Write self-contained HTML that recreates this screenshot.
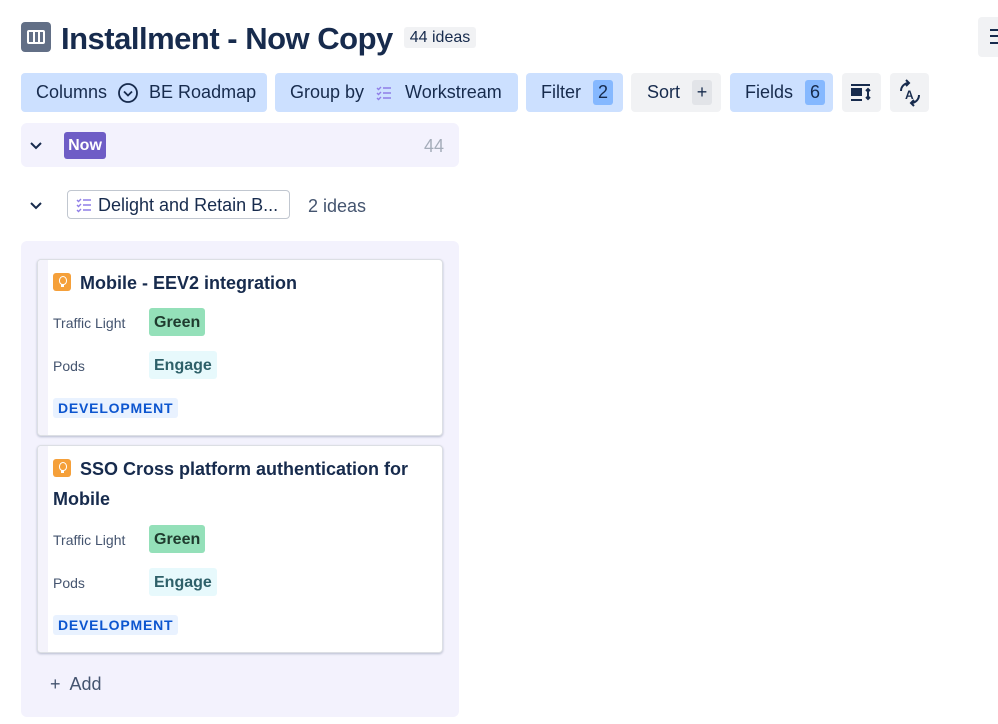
<!DOCTYPE html>
<html><head><style>
*{box-sizing:border-box;margin:0;padding:0}
body{width:998px;height:724px;background:#fff;font-family:"Liberation Sans",sans-serif;color:#172b4d;position:relative;overflow:hidden}
.a{position:absolute}
.btn{position:absolute;top:73px;height:39px;border-radius:4px;display:flex;align-items:center;font-size:18px;color:#172b4d}
.blue{background:#cce0ff}.gray{background:#f1f2f4}
.cnt{display:inline-block;width:20px;height:25px;border-radius:3px;background:#85b8ff;text-align:center;line-height:25px;margin-left:12px}
.card{position:absolute;left:37px;width:406px;background:#fff;border:1px solid #dcdfe4;border-radius:4px;box-shadow:0 1px 2px rgba(9,30,66,.25);overflow:hidden}
.card:before{content:"";position:absolute;left:0;top:0;bottom:0;width:10px;background:#f4f3fb}
.ttl{position:absolute;left:15px;font-size:18px;font-weight:bold;line-height:30px;color:#172b4d}
.ic{display:inline-block;width:18px;height:18px;background:#f5a03a;border-radius:3px;vertical-align:-2px;margin-right:9px;position:relative}
.ic:after{content:"";position:absolute;left:6px;top:3px;width:6px;height:7px;border:1.5px solid #fff;border-radius:50% 50% 45% 45%}
.ic:before{content:"";position:absolute;left:8px;top:11px;width:3px;height:3px;background:#fff}
.lbl{position:absolute;left:15px;font-size:14px;color:#44546f}
.tag{position:absolute;left:111px;height:28px;border-radius:3px;font-size:16px;font-weight:bold;line-height:29px;padding:0 5px}
.dev{position:absolute;left:15px;height:20px;background:#e9f2ff;color:#0c55cf;font-size:14px;font-weight:bold;letter-spacing:.8px;line-height:20px;padding:0 5px;border-radius:3px}
</style></head><body>
<div class="a" style="left:21px;top:22px;width:30px;height:30px;background:#626f86;border-radius:4px"><div class="a" style="left:6px;top:8px;width:18px;height:14px;border:2px solid #fff;border-radius:2px"></div><div class="a" style="left:12px;top:9px;width:2px;height:12px;background:#fff"></div><div class="a" style="left:17px;top:9px;width:2px;height:12px;background:#fff"></div></div>
<div class="a" style="left:61px;top:21px;font-size:31px;font-weight:bold;letter-spacing:-.5px;color:#172b4d">Installment - Now Copy</div>
<div class="a" style="left:404px;top:27px;width:72px;height:21px;background:#f1f2f4;border-radius:3px;font-size:16px;text-align:center;line-height:21px">44 ideas</div>
<div class="a" style="left:978px;top:17px;width:30px;height:40px;background:#f1f2f4;border-radius:4px"><div class="a" style="left:12px;top:12px;width:8px;height:15px;border-top:2px solid #172b4d;border-bottom:2px solid #172b4d"></div><div class="a" style="left:12px;top:18px;width:8px;height:2px;background:#172b4d"></div></div>

<div class="btn blue" style="left:21px;width:246px;padding-left:15px">Columns<svg width="22" height="22" viewBox="0 0 22 22" style="margin:0 10px"><circle cx="11" cy="11" r="9" fill="none" stroke="#172b4d" stroke-width="1.8"/><path d="M7 9.5l4 4 4-4" fill="none" stroke="#172b4d" stroke-width="1.8"/></svg>BE Roadmap</div>
<div class="btn blue" style="left:275px;width:243px;padding-left:15px">Group by<svg width="16" height="16" viewBox="0 0 16 16" style="margin:0 13px 0 12px"><path d="M1 3l1.5 1.5L5 2M1 8l1.5 1.5L5 7M1 13l1.5 1.5L5 12M7 3h8M7 8h8M7 13h8" fill="none" stroke="#8f7ee7" stroke-width="1.4"/></svg>Workstream</div>
<div class="btn blue" style="left:526px;width:97px;padding-left:15px">Filter<span class="cnt">2</span></div>
<div class="btn gray" style="left:631px;width:90px;padding-left:16px">Sort<span class="cnt" style="background:#e2e4e8;width:20px">+</span></div>
<div class="btn blue" style="left:730px;width:103px;padding-left:15px">Fields<span class="cnt">6</span></div>
<div class="btn gray" style="left:842px;width:39px;justify-content:center"><svg width="24" height="20" viewBox="0 0 24 20"><path d="M1 2h19" stroke="#172b4d" stroke-width="2"/><rect x="1" y="5" width="11" height="8" fill="#172b4d"/><path d="M1 17h11M18 6v10M16 8l2-2 2 2M16 14l2 2 2-2" fill="none" stroke="#172b4d" stroke-width="2"/></svg></div>
<div class="btn gray" style="left:890px;width:39px;justify-content:center"><svg width="26" height="28" viewBox="0 0 26 28"><path d="M4 12a8 8 0 0 1 8-8M9 1l3 3-3 3M22 16a8 8 0 0 1-8 8M17 27l-3-3 3-3" fill="none" stroke="#172b4d" stroke-width="2"/><text x="8" y="20" font-size="12" font-weight="bold" font-family="Liberation Sans" fill="#172b4d">A</text></svg></div>

<div class="a" style="left:21px;top:123px;width:438px;height:44px;background:#f3f2fd;border-radius:6px"></div>
<svg class="a" style="left:29px;top:141px" width="14" height="10"><path d="M2 2l5 5 5-5" fill="none" stroke="#172b4d" stroke-width="2"/></svg>
<div class="a" style="left:64px;top:132px;width:42px;height:27px;background:#6e5dc6;border-radius:3px;color:#fff;font-weight:bold;font-size:16px;text-align:center;line-height:27px">Now</div>
<div class="a" style="left:424px;top:136px;font-size:18px;color:#a5adba">44</div>

<svg class="a" style="left:29px;top:201px" width="14" height="10"><path d="M2 2l5 5 5-5" fill="none" stroke="#172b4d" stroke-width="2"/></svg>
<div class="a" style="left:67px;top:190px;width:223px;height:29px;border:1px solid #c1c7d0;border-radius:4px;font-size:18px;line-height:28px;padding-left:30px">Delight and Retain B...</div>
<svg class="a" style="left:76px;top:197px" width="16" height="16" viewBox="0 0 16 16"><path d="M1 3l1.5 1.5L5 2M1 8l1.5 1.5L5 7M1 13l1.5 1.5L5 12M7 3h8M7 8h8M7 13h8" fill="none" stroke="#8f7ee7" stroke-width="1.4"/></svg>
<div class="a" style="left:308px;top:196px;font-size:18px;color:#44546f">2 ideas</div>

<div class="a" style="left:21px;top:241px;width:438px;height:476px;background:#f3f2fd;border-radius:6px"></div>

<div class="card" style="top:259px;height:177px">
<div class="ttl" style="top:8px"><span class="ic"></span>Mobile - EEV2 integration</div>
<div class="lbl" style="top:55px">Traffic Light</div>
<div class="tag" style="top:48px;background:#94e0b9;color:#1f3b2e">Green</div>
<div class="lbl" style="top:98px">Pods</div>
<div class="tag" style="top:91px;background:#e7f9fc;color:#2e6069">Engage</div>
<div class="dev" style="top:138px">DEVELOPMENT</div>
</div>

<div class="card" style="top:445px;height:208px">
<div class="ttl" style="top:8px;width:370px">
<span class="ic"></span>SSO Cross platform authentication for Mobile</div>
<div class="lbl" style="top:86px">Traffic Light</div>
<div class="tag" style="top:79px;background:#94e0b9;color:#1f3b2e">Green</div>
<div class="lbl" style="top:129px">Pods</div>
<div class="tag" style="top:122px;background:#e7f9fc;color:#2e6069">Engage</div>
<div class="dev" style="top:169px">DEVELOPMENT</div>
</div>

<div class="a" style="left:50px;top:674px;font-size:18px;color:#44546f">+&nbsp; Add</div>
</body></html>
